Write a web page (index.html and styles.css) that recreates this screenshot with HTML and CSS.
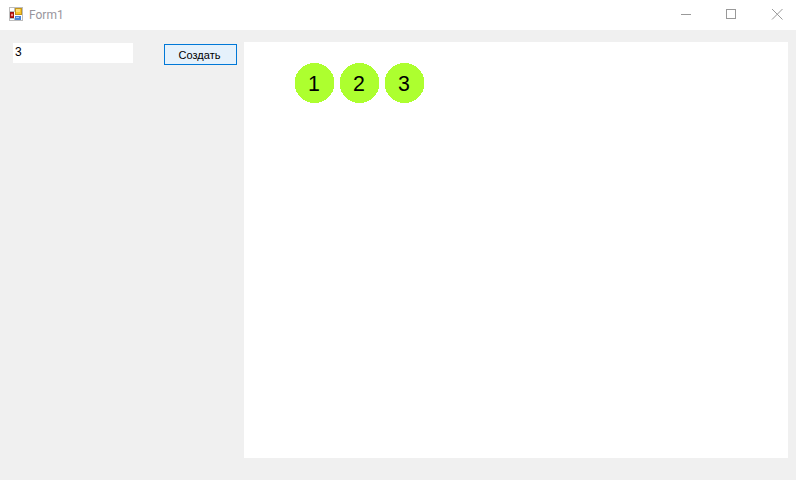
FILE: index.html
```html
<!DOCTYPE html>
<html lang="ru">
<head>
<meta charset="utf-8">
<title>Form1</title>
<link rel="stylesheet" href="styles.css">
</head>
<body>
<div class="window">
  <header class="titlebar">
    <svg class="app-icon" width="14" height="14" viewBox="0 0 14 14">
      <rect x="0.5" y="0.5" width="13" height="13" fill="#fff" stroke="#bdbdbd"/>
      <path d="M0.5 4.5H5.5M5.5 0.5V4.5M0.5 11.5H5.5V13.5M5.5 11.5V13.5" stroke="#bdbdbd" fill="none"/>
      <rect x="1.5" y="5.5" width="3" height="5" fill="#d81f1a" stroke="#9a1512"/>
      <rect x="2" y="7" width="2" height="2" fill="#ee8a80"/>
      <rect x="6.5" y="1.5" width="6" height="6" fill="#f8c42a" stroke="#c4961a"/>
      <rect x="7" y="2" width="4" height="3" fill="#fddc74"/>
      <rect x="6" y="9" width="6" height="4" fill="#4a86d8"/>
      <rect x="7" y="10" width="3" height="1" fill="#a9cbf2"/>
    </svg>
    <span class="title">Form1</span>
    <div class="controls">
      <svg class="control" width="46" height="30" viewBox="0 0 46 30"><path d="M20 14.5H30" stroke="#999" fill="none"/></svg>
      <svg class="control" width="46" height="30" viewBox="0 0 46 30"><rect x="19.5" y="9.5" width="9" height="9" stroke="#999" fill="none"/></svg>
      <svg class="control" width="46" height="30" viewBox="0 0 46 30"><path d="M19 9L29.5 19.5M29.5 9L19 19.5" stroke="#999" fill="none"/></svg>
    </div>
  </header>
  <main class="client">
    <input class="count" type="text" value="3">
    <button class="create" type="button">Создать</button>
    <section class="panel">
      <svg class="node" width="41" height="41" viewBox="0 0 41 41"><circle class="node-disc" cx="20.5" cy="20" r="20"/><text class="node-label" x="20" y="28">1</text></svg>
      <svg class="node" width="41" height="41" viewBox="0 0 41 41"><circle class="node-disc" cx="20.5" cy="20" r="20"/><text class="node-label" x="20" y="28">2</text></svg>
      <svg class="node" width="41" height="41" viewBox="0 0 41 41"><circle class="node-disc" cx="20.5" cy="20" r="20"/><text class="node-label" x="20" y="28">3</text></svg>
    </section>
  </main>
</div>
</body>
</html>
```
FILE: styles.css
```css
* { box-sizing: border-box; }
html, body { margin: 0; padding: 0; }
body { width: 796px; height: 480px; overflow: hidden; background: #f0f0f0; font-family: "Liberation Sans", Arial, sans-serif; }
.window { display: flex; flex-direction: column; height: 480px; }
.titlebar { display: flex; align-items: center; height: 30px; background: #fff; padding-left: 9px; flex: none; }
.app-icon { display: block; flex: none; margin-top: -2px; }
.title { margin: -1px 0 0 6px; font: 12px Roboto, sans-serif; color: #99959c; }
.controls { display: flex; margin-left: auto; margin-right: -3px; }
.control { display: block; }
.client { display: flex; align-items: flex-start; flex: 1; padding: 12px 8px 22px 13px; }
.count { width: 120px; height: 20px; margin-top: 1px; border: 0; padding: 0 2px 3px; background: #fff; font: 12px "Liberation Sans", Arial, sans-serif; color: #000; outline: none; }
.create { width: 73px; height: 21px; margin: 2px 0 0 31px; padding: 0 2px 0 0; border: 1px solid #0078d7; border-radius: 0; background: #e5f1fb; font: 11px "Liberation Sans", Arial, sans-serif; color: #000; }
.panel { display: flex; gap: 4px; align-items: flex-start; width: 544px; height: 416px; margin-left: 7px; padding: 21px 0 0 50px; background: #fff; }
.node { display: block; flex: none; }
.node-disc { fill: #adff2f; shape-rendering: crispEdges; }
.node-label { font: 21.33px "Liberation Sans", Arial, sans-serif; fill: #000; text-anchor: middle; }
```
